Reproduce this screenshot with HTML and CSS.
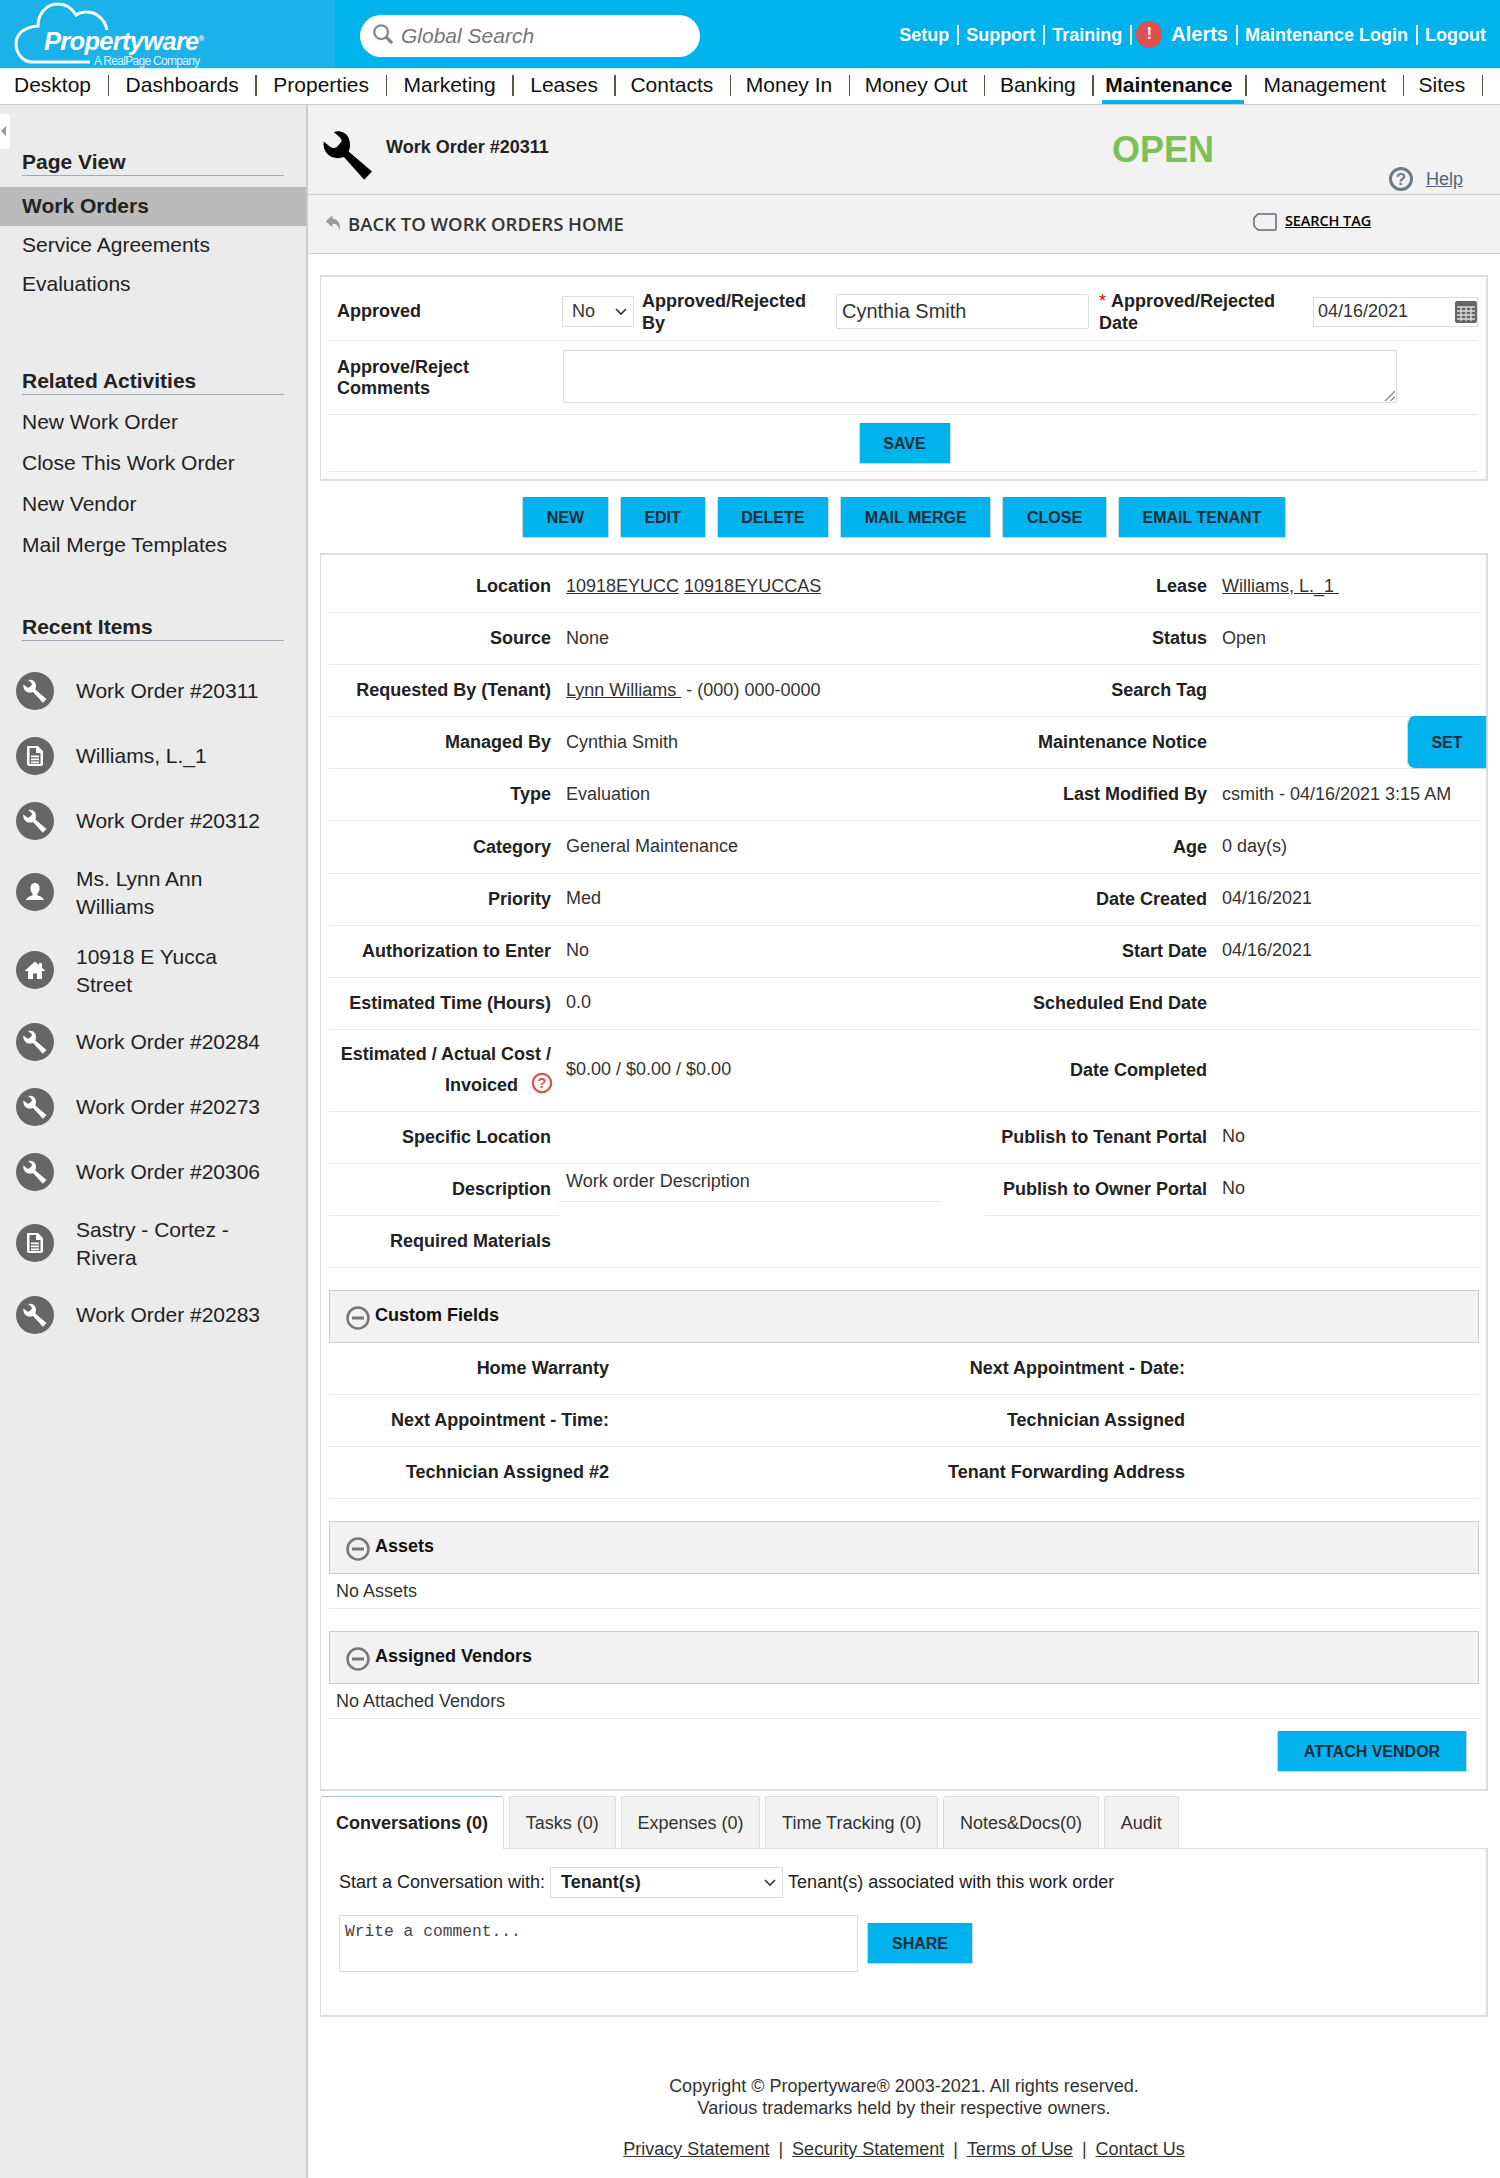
FILE: index.html
```html
<!DOCTYPE html>
<html lang="en">
<head>
    <meta charset="UTF-8">
    <title>Work Order #20311</title>
    <link rel="stylesheet" href="styles.css">
</head>
<body>
    <svg class="defs" width="0" height="0">
        <symbol id="wrench" viewBox="38 30 148 148"><path d="M70 36C88 30 106 38 113 52 120 66 119 82 114 94L183 153 160 177 100 110C84 116 64 114 52 102 42 92 38 78 40 64L60 80C66 85 74 84 79 80L90 68C95 62 94 58 88 52Z"/></symbol>
        <symbol id="doc" viewBox="0 0 24 24"><path d="M5 2h10l5 5v13c0 1-1 2-2 2H6c-1 0-2-1-2-2V3c0-.6.4-1 1-1zm1.500 2v16h11V9h-4.500V4zM8 11.500h8v1.700H8zm0 3h8v1.700H8zm0 3h8v1.700H8z"/></symbol>
        <symbol id="person" viewBox="0 0 24 24"><path d="M12 3c3 0 4.600 2.300 4.600 5.200 0 2.200-.9 4.300-2.200 5.400v1.600c2.600 1 6.100 2.300 6.600 4.800H3c.5-2.500 4-3.800 6.600-4.800v-1.600C8.300 12.500 7.400 10.400 7.400 8.200 7.400 5.300 9 3 12 3z"/></symbol>
        <symbol id="house" viewBox="0 0 24 24"><path d="M12 3.500L1.500 13H5v8h5v-5.500h4V21h5v-8h3.500l-3.500-3.200V5h-3v2.100z"/></symbol>
        <symbol id="minus" viewBox="0 0 24 24"><circle cx="12" cy="12" r="10.500" fill="none" stroke="#777" stroke-width="2.500"/><rect x="6" y="10.500" width="12" height="3" fill="#777"/></symbol>
    </svg>

    <header class="topbar">
        <div class="logo-zone">
            <svg class="logo-cloud" viewBox="0 0 220 68"><path d="M90 62H32C22 62 16 52 16 44 16 34 24 27 38 26 38 14 46 4 58 4 66 4 72 8 76 15 80 12 90 10 97 15 103 19 106 24 107 30" fill="none" stroke="#fff" stroke-width="3"/></svg>
            <span class="logo-name">Propertyware<sup>®</sup></span>
            <span class="logo-sub">A RealPage Company</span>
        </div>
        <div class="search">
            <svg class="search-icon" viewBox="0 0 24 24"><circle cx="10" cy="10" r="7.500" fill="none" stroke="#888" stroke-width="2.500"/><path d="M15 15l7 7" stroke="#888" stroke-width="3.500"/></svg>
            <span>Global Search</span>
        </div>
        <nav class="toplinks">
            <a>Setup</a><i></i><a>Support</a><i></i><a>Training</a><i></i>
            <b class="alert-dot">!</b><a class="alerts">Alerts</a><i></i><a>Maintenance Login</a><i></i><a>Logout</a>
        </nav>
    </header>

    <nav class="mainnav">
        <a>Desktop</a><a>Dashboards</a><a>Properties</a><a>Marketing</a><a>Leases</a><a>Contacts</a><a>Money In</a><a>Money Out</a><a>Banking</a><a class="active">Maintenance</a><a>Management</a><a>Sites</a>
    </nav>

    <div class="layout">
        <aside class="sidebar">
            <div class="collapse"><span></span></div>
            <h3 class="side-head first">Page View</h3>
            <ul class="side-list pageview">
                <li class="current">Work Orders</li>
                <li>Service Agreements</li>
                <li>Evaluations</li>
            </ul>
            <h3 class="side-head related">Related Activities</h3>
            <ul class="side-list activities">
                <li>New Work Order</li>
                <li>Close This Work Order</li>
                <li>New Vendor</li>
                <li>Mail Merge Templates</li>
            </ul>
            <h3 class="side-head recent">Recent Items</h3>
            <ul class="recent-list">
                <li><span class="round"><svg><use href="#wrench"/></svg></span>Work Order #20311</li>
                <li><span class="round"><svg><use href="#doc"/></svg></span>Williams, L._1</li>
                <li><span class="round"><svg><use href="#wrench"/></svg></span>Work Order #20312</li>
                <li class="two-line"><span class="round"><svg><use href="#person"/></svg></span>Ms. Lynn Ann<br>Williams</li>
                <li class="two-line"><span class="round"><svg><use href="#house"/></svg></span>10918 E Yucca<br>Street</li>
                <li><span class="round"><svg><use href="#wrench"/></svg></span>Work Order #20284</li>
                <li><span class="round"><svg><use href="#wrench"/></svg></span>Work Order #20273</li>
                <li><span class="round"><svg><use href="#wrench"/></svg></span>Work Order #20306</li>
                <li class="two-line"><span class="round"><svg><use href="#doc"/></svg></span>Sastry - Cortez -<br>Rivera</li>
                <li><span class="round"><svg><use href="#wrench"/></svg></span>Work Order #20283</li>
            </ul>
        </aside>

        <main class="content">
            <section class="titlebar">
                <svg class="big-wrench"><use href="#wrench"/></svg>
                <h2>Work Order #20311</h2>
                <div class="status">OPEN</div>
                <div class="help">
                    <svg viewBox="0 0 24 24"><circle cx="12" cy="12" r="10.500" fill="none" stroke="#6f7a85" stroke-width="3"/><text x="12" y="18" text-anchor="middle" class="help-mark">?</text></svg>
                    <a>Help</a>
                </div>
            </section>
            <section class="backbar">
                <svg class="back-arrow" viewBox="0 0 24 24"><path d="M10 3L2 10l8 7v-4c4 0 7 1 9 8 1-8-2-14-9-14z" fill="#999"/></svg>
                <span class="back-text">BACK TO WORK ORDERS HOME</span>
                <svg class="tag-icon" viewBox="0 0 24 18"><path d="M5 1h17c.6 0 1 .4 1 1v14c0 .6-.4 1-1 1H5l-4-4V5z" fill="none" stroke="#667" stroke-width="1.500"/></svg>
                <a class="tag-text">SEARCH TAG</a>
            </section>

            <section class="panel approve-panel">
                <div class="approve-row one">
                    <label class="ap-label">Approved</label>
                    <div class="fake-select small"><span>No</span><svg class="chev" viewBox="0 0 12 8"><path d="M1 1l5 5 5-5" fill="none" stroke="#333" stroke-width="1.600"/></svg></div>
                    <label class="ap-by">Approved/Rejected By</label>
                    <div class="name-input">Cynthia Smith</div>
                    <div class="ap-date"><em>*</em><span>Approved/Rejected</span><br><span>Date</span></div>
                    <div class="date-input"><span>04/16/2021</span>
                        <svg viewBox="0 0 24 24"><rect x="1" y="1" width="22" height="22" rx="2" fill="#666"/><path d="M3 7h18M3 11h18M3 15h18M3 19h18M7 7v14M12 7v14M17 7v14" stroke="#ddd" stroke-width="1.300"/></svg>
                    </div>
                </div>
                <div class="approve-row two">
                    <label class="ap-label">Approve/Reject Comments</label>
                    <div class="comment-box"><svg viewBox="0 0 10 10"><path d="M1 10l9-9M6 10l4-4" stroke="#777" stroke-width="1"/></svg></div>
                </div>
                <div class="approve-row three"><button class="btn save">SAVE</button></div>
            </section>

            <div class="actions">
                <button class="btn">NEW</button>
                <button class="btn">EDIT</button>
                <button class="btn">DELETE</button>
                <button class="btn">MAIL MERGE</button>
                <button class="btn">CLOSE</button>
                <button class="btn">EMAIL TENANT</button>
            </div>

            <section class="panel details">
                <div class="drow">
                    <label>Location</label><div class="val"><a>10918EYUCC</a> <a>10918EYUCCAS</a></div>
                    <label>Lease</label><div class="val"><a>Williams, L._1&nbsp;</a></div>
                </div>
                <div class="drow">
                    <label>Source</label><div class="val">None</div>
                    <label>Status</label><div class="val">Open</div>
                </div>
                <div class="drow">
                    <label>Requested By (Tenant)</label><div class="val"><a>Lynn Williams&nbsp;</a> - (000) 000-0000</div>
                    <label>Search Tag</label><div class="val"></div>
                </div>
                <div class="drow">
                    <label>Managed By</label><div class="val">Cynthia Smith</div>
                    <label>Maintenance Notice</label><div class="val"><button class="btn set">SET</button></div>
                </div>
                <div class="drow">
                    <label>Type</label><div class="val">Evaluation</div>
                    <label>Last Modified By</label><div class="val">csmith - 04/16/2021 3:15 AM</div>
                </div>
                <div class="drow">
                    <label>Category</label><div class="val">General Maintenance</div>
                    <label>Age</label><div class="val">0 day(s)</div>
                </div>
                <div class="drow">
                    <label>Priority</label><div class="val">Med</div>
                    <label>Date Created</label><div class="val">04/16/2021</div>
                </div>
                <div class="drow">
                    <label>Authorization to Enter</label><div class="val">No</div>
                    <label>Start Date</label><div class="val">04/16/2021</div>
                </div>
                <div class="drow">
                    <label>Estimated Time (Hours)</label><div class="val">0.0</div>
                    <label>Scheduled End Date</label><div class="val"></div>
                </div>
                <div class="drow tall">
                    <label class="wrapped">Estimated / Actual Cost /<br>Invoiced <svg class="red-help" viewBox="0 0 24 24"><circle cx="12" cy="12" r="10" fill="none" stroke="#d9534f" stroke-width="2.500"/><text x="12" y="17.500" text-anchor="middle" class="help-red">?</text></svg></label><div class="val">$0.00 / $0.00 / $0.00</div>
                    <label>Date Completed</label><div class="val"></div>
                </div>
                <div class="drow">
                    <label>Specific Location</label><div class="val"></div>
                    <label>Publish to Tenant Portal</label><div class="val">No</div>
                </div>
                <div class="drow desc">
                    <label class="line">Description</label><div class="val desc-val">Work order Description</div>
                    <label class="pub">Publish to Owner Portal</label><div class="val line">No</div>
                </div>
                <div class="drow">
                    <label>Required Materials</label><div class="val"></div>
                    <div></div><div></div>
                </div>

                <div class="section-bar custom-bar"><svg><use href="#minus"/></svg><span>Custom Fields</span></div>
                <div class="crow"><label>Home Warranty</label><div></div><label>Next Appointment - Date:</label><div></div></div>
                <div class="crow"><label>Next Appointment - Time:</label><div></div><label>Technician Assigned</label><div></div></div>
                <div class="crow"><label>Technician Assigned #2</label><div></div><label>Tenant Forwarding Address</label><div></div></div>

                <div class="section-bar"><svg><use href="#minus"/></svg><span>Assets</span></div>
                <div class="plain-row">No Assets</div>
                <div class="section-bar"><svg><use href="#minus"/></svg><span>Assigned Vendors</span></div>
                <div class="plain-row">No Attached Vendors</div>
                <div class="attach-row"><button class="btn attach">ATTACH VENDOR</button></div>
            </section>

            <div class="tabs">
                <span class="tab on">Conversations (0)</span>
                <span class="tab">Tasks (0)</span>
                <span class="tab">Expenses (0)</span>
                <span class="tab">Time Tracking (0)</span>
                <span class="tab">Notes&amp;Docs(0)</span>
                <span class="tab">Audit</span>
            </div>
            <section class="tab-body">
                <div class="convo-row">
                    <span>Start a Conversation with:</span>
                    <div class="fake-select tenant"><b>Tenant(s)</b><svg class="chev" viewBox="0 0 12 8"><path d="M1 1l5 5 5-5" fill="none" stroke="#333" stroke-width="1.600"/></svg></div>
                    <span>Tenant(s) associated with this work order</span>
                </div>
                <div class="share-row">
                    <div class="write-box">Write a comment...</div>
                    <button class="btn share">SHARE</button>
                </div>
            </section>

            <footer class="foot">
                <p>Copyright © Propertyware® 2003-2021. All rights reserved.<br>Various trademarks held by their respective owners.</p>
                <p class="foot-links"><a>Privacy Statement</a> | <a>Security Statement</a> | <a>Terms of Use</a> | <a>Contact Us</a></p>
            </footer>
        </main>
    </div>
</body>
</html>
```

FILE: styles.css
```css
* {
    box-sizing: border-box;
}
body {
    margin: 0;
    font-family: "Liberation Sans", Arial, sans-serif;
    font-size: 18px;
    color: #222;
    background: #fff;
}
.defs {
    position: absolute;
}
h2, h3, ul, p {
    margin: 0;
    padding: 0;
}
ul {
    list-style: none;
}

/* top bar */
.topbar {
    display: flex;
    align-items: center;
    height: 68px;
    background: #00b3ec;
}
.logo-zone {
    position: relative;
    flex: none;
    width: 335px;
    height: 68px;
    background: #1ab2e8;
    color: #fff;
}
.logo-cloud {
    position: absolute;
    left: 0;
    top: 0;
    width: 220px;
    height: 68px;
}
.logo-name {
    position: absolute;
    left: 44px;
    top: 27px;
    font-size: 25.500px;
    font-weight: bold;
    font-style: italic;
    letter-spacing: -0.700px;
    white-space: nowrap;
}
.logo-name sup {
    font-size: 8px;
    font-style: normal;
}
.logo-sub {
    position: absolute;
    left: 94px;
    top: 54px;
    font-size: 12px;
    letter-spacing: -0.700px;
    white-space: nowrap;
    color: #d5f2fb;
}
.search {
    display: flex;
    align-items: center;
    width: 340px;
    height: 42px;
    margin-left: 25px;
    margin-top: 4px;
    padding-left: 12px;
    background: #fff;
    border-radius: 21px;
    color: #777;
    font-size: 21px;
    font-style: italic;
}
.search-icon {
    width: 22px;
    height: 24px;
    margin-right: 7px;
    margin-top: -4px;
}
.toplinks {
    display: flex;
    align-items: center;
    margin-left: auto;
    padding-right: 14px;
    padding-top: 2px;
    color: #fff;
    font-size: 18px;
    font-weight: bold;
}
.toplinks i {
    width: 2px;
    height: 20px;
    margin: 0 7.500px;
    background: #e8f8fd;
}
.alert-dot {
    display: flex;
    align-items: center;
    justify-content: center;
    width: 26px;
    height: 27px;
    margin-left: -3px;
    margin-right: 9px;
    margin-top: -2px;
    border-radius: 50%;
    background: #e0504f;
    font-size: 17px;
}
.alerts {
    font-size: 20px;
    margin-top: -2px;
}

/* main nav */
.mainnav {
    display: flex;
    height: 37px;
    padding-left: 14px;
    border-top: 1px solid #cfe;
    border-bottom: 1px solid #ccc;
    font-size: 21px;
    color: #111;
    overflow: hidden;
}
.mainnav a {
    position: relative;
    display: block;
    flex: none;
    margin-right: 32.500px;
    line-height: 31px;
    white-space: nowrap;
}
.mainnav a:nth-child(-n+4) {
    margin-right: 34.500px;
}
.mainnav a::after {
    content: "";
    position: absolute;
    right: -18px;
    top: 6px;
    width: 1.500px;
    height: 21px;
    background: #554;
}
.mainnav a.active {
    font-weight: bold;
    margin-left: -3px;
    margin-right: 31px;
}
.mainnav a.active::after {
    right: -14px;
}
.mainnav a.active::before {
    content: "";
    position: absolute;
    left: -3px;
    right: -11px;
    bottom: 0;
    height: 4px;
    background: #00b3ec;
}

/* sidebar */
.layout {
    display: flex;
    height: 2073px;
}
.sidebar {
    position: relative;
    flex: none;
    width: 308px;
    background: #ebebeb;
    border-right: 2px solid #ccc;
}
.collapse {
    position: absolute;
    left: 0;
    top: 9px;
    width: 10px;
    height: 35px;
    background: #fff;
    border-radius: 0 4px 4px 0;
}
.collapse span {
    position: absolute;
    left: 1px;
    top: 12px;
    border: 5px solid transparent;
    border-right-color: #999;
    border-left: 0;
}
.side-head {
    height: 33px;
    margin: 0 22px;
    border-bottom: 1px solid #a0a8b8;
    font-size: 21px;
    line-height: 37px;
    color: #222;
}
.side-head.first {
    margin-top: 38px;
}
.side-head.related {
    margin-top: 65px;
    height: 26px;
    line-height: 23px;
}
.side-head.recent {
    margin-top: 49px;
    height: 26px;
    line-height: 23px;
}
.side-list li {
    padding-left: 22px;
    font-size: 21px;
}
.pageview {
    margin-top: 11px;
}
.pageview li {
    height: 39px;
    line-height: 37px;
}
.pageview li.current {
    width: 306px;
    background: #bbb;
    font-weight: bold;
    line-height: 38px;
}
.activities {
    margin-top: 7px;
}
.activities li {
    height: 41px;
    line-height: 39px;
}
.recent-list {
    margin-top: 17px;
}
.recent-list li {
    position: relative;
    display: flex;
    align-items: center;
    min-height: 65px;
    padding: 11px 10px 11px 76px;
    font-size: 21px;
    line-height: 28px;
}
.recent-list li.two-line {
    display: block;
    padding-top: 12px;
    padding-bottom: 10px;
}
.round {
    position: absolute;
    left: 16px;
    top: 50%;
    margin-top: -19px;
    width: 38px;
    height: 38px;
    padding: 7px;
    border-radius: 50%;
    background: #666;
}
.round svg {
    display: block;
    width: 24px;
    height: 24px;
    fill: #fff;
}

/* title */
.content {
    flex: 1;
    min-width: 0;
}
.titlebar {
    position: relative;
    height: 90px;
    background: #f2f2f2;
    border-bottom: 1px solid #ccc;
}
.big-wrench {
    position: absolute;
    left: 15px;
    top: 25px;
    width: 50px;
    height: 50px;
    fill: #000;
}
.titlebar h2 {
    position: absolute;
    left: 78px;
    top: 32px;
    font-size: 18px;
}
.status {
    position: absolute;
    left: 804px;
    top: 24px;
    font-size: 36px;
    font-weight: bold;
    color: #7dc05a;
}
.help {
    position: absolute;
    left: 1081px;
    top: 62px;
    display: flex;
    align-items: center;
    gap: 13px;
    color: #4d6680;
    font-size: 18px;
    text-decoration: underline;
}
.help svg {
    width: 24px;
    height: 24px;
}
.help-mark {
    font: bold 17px "Liberation Sans", sans-serif;
    fill: #6f7a85;
}
.backbar {
    position: relative;
    display: flex;
    align-items: center;
    height: 59px;
    padding-left: 16px;
    padding-bottom: 2px;
    background: #f2f2f2;
    border-bottom: 1px solid #ccc;
}
.back-arrow {
    width: 20px;
    height: 20px;
    margin-right: 4px;
}
.back-text {
    font-family: "Open Sans", sans-serif;
    font-size: 18.500px;
    font-weight: 600;
    color: #333;
}
.tag-icon {
    position: absolute;
    left: 945px;
    top: 18px;
    width: 24px;
    height: 18px;
}
.tag-text {
    position: absolute;
    left: 977px;
    top: 16px;
    font-family: "Open Sans", sans-serif;
    font-size: 14.500px;
    font-weight: 600;
    letter-spacing: -0.100px;
    color: #000;
    text-decoration: underline;
}

/* panels */
.panel {
    margin-left: 12px;
    margin-right: 12px;
    background: #fff;
    border: 1px solid #ddd;
    border-width: 2px 2px 2px 1px;
}
.approve-panel {
    height: 206px;
    margin-top: 21px;
    padding: 0 8px;
}
.approve-row {
    display: flex;
    align-items: center;
    border-bottom: 1px solid #e8e8e8;
}
.approve-row.one {
    height: 64px;
    padding-top: 6px;
    font-weight: bold;
}
.approve-row.two {
    height: 74px;
}
.approve-row.three {
    justify-content: center;
    height: 57px;
    padding-left: 2px;
    padding-top: 1px;
}
.ap-label {
    width: 234px;
    padding-left: 8px;
    font-weight: bold;
    line-height: 21px;
}
.approve-row.two .ap-label {
    padding-right: 60px;
}
.fake-select {
    display: flex;
    flex: none;
    align-items: center;
    justify-content: space-between;
    border: 1px solid #ddd;
    background: #fff;
    font-weight: normal;
}
.fake-select.small {
    width: 72px;
    height: 31px;
    padding: 0 6px 0 9px;
    color: #333;
}
.chev {
    width: 12px;
    height: 8px;
}
.ap-by {
    flex: none;
    width: 202px;
    margin-top: 2px;
    padding-left: 8px;
    padding-right: 30px;
    line-height: 21.500px;
}
.name-input {
    flex: none;
    width: 253px;
    height: 35px;
    padding-left: 5px;
    border: 1px solid #ddd;
    border-radius: 2px;
    font-weight: normal;
    font-size: 20px;
    line-height: 33px;
    color: #333;
}
.ap-date {
    flex: none;
    width: 224px;
    margin-top: 2px;
    padding-left: 10px;
    padding-right: 20px;
    line-height: 21.500px;
}
.ap-date em {
    margin-right: 5px;
    color: #e00;
    font-style: normal;
    font-weight: normal;
}
.date-input {
    display: flex;
    flex: none;
    align-items: center;
    justify-content: space-between;
    width: 165px;
    height: 30px;
    padding-left: 4px;
    border: 1px solid #ddd;
    font-weight: normal;
    color: #333;
}
.date-input svg {
    width: 24px;
    height: 24px;
    margin-right: -1px;
}
.comment-box {
    position: relative;
    width: 834px;
    height: 53px;
    margin-top: -2px;
    border: 1px solid #ddd;
}
.comment-box svg {
    position: absolute;
    right: 1px;
    bottom: 1px;
    width: 11px;
    height: 11px;
}
.btn {
    display: block;
    height: 41px;
    padding: 0;
    border: 1px solid #28a;
    border-color: #0aa5d8 #c4d8e0 #c4d8e0;
    border-radius: 2px;
    background: #00b3ec;
    font-family: "Liberation Sans", sans-serif;
    font-size: 16px;
    font-weight: bold;
    color: #1d2c38;
}
.save {
    width: 92px;
}
.actions {
    display: flex;
    justify-content: center;
    gap: 11px;
    height: 72px;
    padding: 16px 0 0;
}
.actions .btn {
    padding: 0 23.700px;
}

/* detail table */
.details {
    height: 1238px;
    padding: 6px 7px 0 8px;
}
.drow {
    display: grid;
    grid-template-columns: 230px 382px 274px 264px;
    align-items: center;
    height: 52.100px;
    border-bottom: 1px solid #e8e8e8;
}
.drow.tall {
    height: 82px;
}
.drow label {
    padding-right: 8px;
    text-align: right;
    font-weight: bold;
}
.drow label.wrapped {
    line-height: 31px;
}
.red-help {
    width: 22px;
    height: 22px;
    margin-left: 8px;
    margin-right: -2px;
    vertical-align: -3px;
}
.help-red {
    font: bold 16px "Liberation Sans", sans-serif;
    fill: #d9534f;
}
.val {
    position: relative;
    padding-left: 7px;
    margin-top: -1px;
    color: #333;
}
.val a {
    text-decoration: underline;
}
.set {
    position: absolute;
    right: -8px;
    top: -26px;
    width: 80px;
    height: 53px;
    border-radius: 8px 0 0 8px;
}
.drow.desc {
    align-items: stretch;
    border-bottom: 0;
}
.desc label, .desc .val {
    margin: 0;
    padding-top: 15px;
}
.desc label.line {
    border-bottom: 1px solid #e8e8e8;
}
.desc .desc-val {
    height: 38px;
    padding-top: 7px;
    padding-left: 7px;
    border-bottom: 1px solid #e8e8e8;
}
.desc label.pub {
    margin-left: 44px;
    border-bottom: 1px solid #e8e8e8;
}
.desc .val.line {
    padding-top: 14px;
    border-bottom: 1px solid #e8e8e8;
}
.section-bar {
    display: flex;
    align-items: center;
    height: 53px;
    padding: 0 0 2px 16px;
    background: #f2f2f2;
    border: 1px solid #ccc;
    font-weight: bold;
    color: #111;
}
.section-bar svg {
    width: 24px;
    height: 24px;
    margin-right: 5px;
    margin-top: 5px;
}
.custom-bar {
    margin-top: 22px;
}
.crow {
    display: grid;
    grid-template-columns: 280px 296px 280px 1fr;
    align-items: center;
    height: 52px;
    border-bottom: 1px solid #e8e8e8;
}
.crow label {
    text-align: right;
    font-weight: bold;
}
.crow + .section-bar, .plain-row + .section-bar {
    margin-top: 22px;
}
.plain-row {
    height: 35px;
    padding-left: 7px;
    line-height: 34px;
    border-bottom: 1px solid #e8e8e8;
    color: #333;
}
.attach-row {
    display: flex;
    justify-content: flex-end;
    padding: 12px 12px 0 0;
}
.attach {
    width: 190px;
}

/* tabs */
.tabs {
    display: flex;
    gap: 5px;
    height: 52px;
    margin: 5px 12px 0;
}
.tab {
    position: relative;
    height: 52px;
    padding: 0 15.800px;
    line-height: 53px;
    background: #f2f2f2;
    border: 1px solid #ddd;
    border-bottom: 0;
    border-radius: 3px 3px 0 0;
    color: #333;
}
.tab.on {
    height: 53px;
    padding: 0 15px;
    background: #fff;
    font-weight: bold;
    border-top-color: #a9c6d8;
    color: #222;
}
.tab-body {
    height: 169px;
    margin: 0 12px;
    padding: 18px 0 0 18px;
    border: 1px solid #ddd;
    border-width: 1px 2px 2px 1px;
}
.convo-row {
    display: flex;
    align-items: center;
    gap: 5px;
    color: #222;
}
.fake-select.tenant {
    width: 233px;
    height: 31px;
    padding: 0 6px 0 10px;
}
.share-row {
    display: flex;
    align-items: center;
    gap: 9px;
    margin-top: 17px;
}
.write-box {
    width: 519px;
    height: 57px;
    padding: 6px 5px;
    border: 1px solid #ddd;
    font-family: "Liberation Mono", monospace;
    font-size: 16.300px;
    color: #444;
}
.share {
    width: 106px;
}

/* footer */
.foot {
    padding-top: 58px;
    text-align: center;
    font-size: 18px;
    line-height: 22px;
    color: #333;
}
.foot-links {
    margin-top: 19px;
}
.foot-links a {
    text-decoration: underline;
    margin: 0 4px;
}
```
